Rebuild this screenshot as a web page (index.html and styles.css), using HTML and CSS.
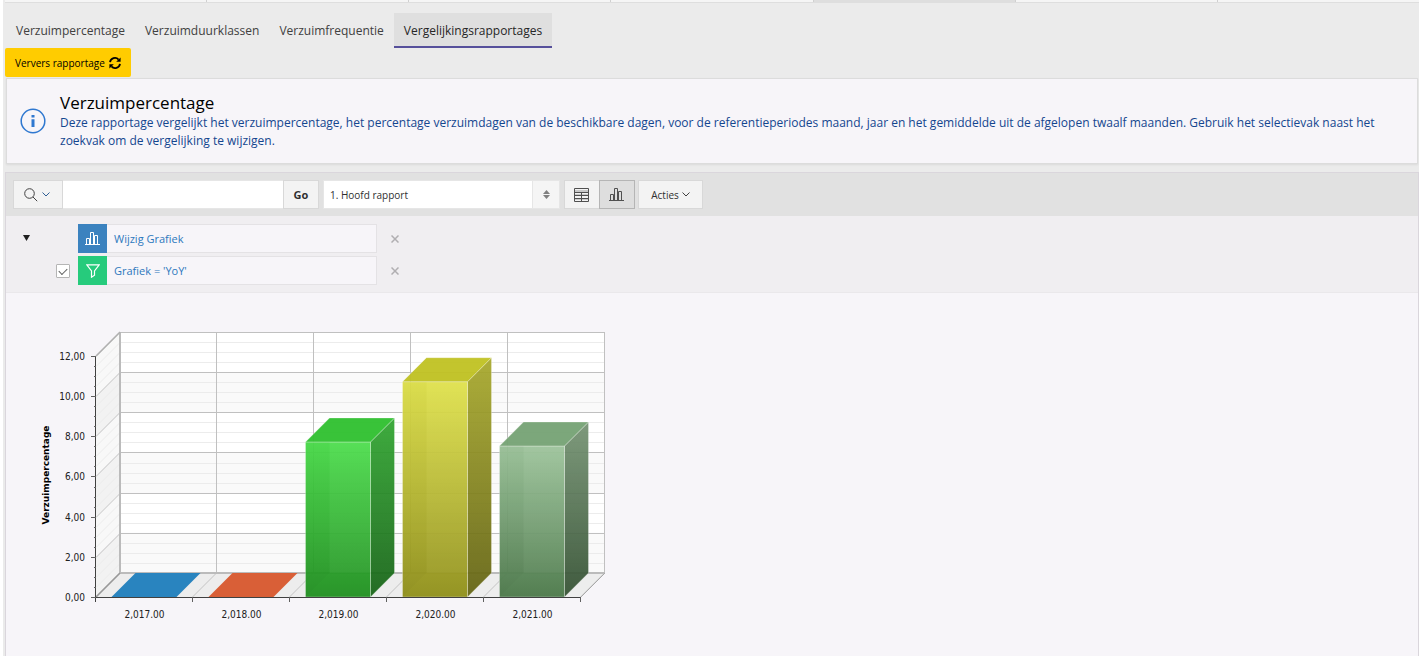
FILE: index.html
```html
<!DOCTYPE html>
<html lang="nl">
<head>
  <meta charset="UTF-8">
  <title>Vergelijkingsrapportages</title>
  <link rel="stylesheet" href="styles.css">
</head>
<body>

  <div class="page">
    <div class="top-strip">
      <span></span><span></span><span></span><span></span><span class="current"></span><span></span><span></span>
    </div>

    <nav class="tabs">
      <a href="#">Verzuimpercentage</a>
      <a href="#">Verzuimduurklassen</a>
      <a href="#">Verzuimfrequentie</a>
      <a href="#" class="active">Vergelijkingsrapportages</a>
    </nav>

    <button type="button" class="refresh">
      Ververs rapportage
      <svg width="12" height="12" viewBox="0 0 12 12">
        <path d="M1 5.2A5 5 0 0 1 9.6 2.6M11 6.8A5 5 0 0 1 2.4 9.4" fill="none" stroke="#000" stroke-width="1.8"/>
        <path d="M11.6 0.4V4.8H7.2ZM0.4 11.6V7.2H4.8Z" fill="#000"/>
      </svg>
    </button>

    <section class="info">
      <svg class="info-icon" width="26" height="26" viewBox="0 0 26 26">
        <circle cx="13" cy="13" r="11.8" fill="none" stroke="#2f78d0" stroke-width="1.5"/>
        <path d="M11.5 7h3v2.6h-3zM11.5 11.2h3V19h-3z" fill="#2f78d0"/>
      </svg>
      <div class="info-text">
        <h2>Verzuimpercentage</h2>
        <p>Deze rapportage vergelijkt het verzuimpercentage, het percentage verzuimdagen van de beschikbare dagen, voor de referentieperiodes maand, jaar en het gemiddelde uit de afgelopen twaalf maanden. Gebruik het selectievak naast het zoekvak om de vergelijking te wijzigen.</p>
      </div>
    </section>

    <section class="report">
      <div class="toolbar">
        <div class="search">
          <button type="button" class="btn search-col" aria-label="Kolommen om in te zoeken">
            <svg width="14" height="14" viewBox="0 0 14 14" fill="none" stroke="#404040"><circle cx="5.5" cy="5.5" r="4.8"/><path d="M9 9l4.2 4.2"/></svg>
            <svg width="8" height="5" viewBox="0 0 8 5" fill="none" stroke="#2f5f95"><path d="M0.5 0.5L4 4L7.5 0.5"/></svg>
          </button>
          <input type="text" class="search-field" aria-label="Zoeken">
          <button type="button" class="btn go">Go</button>
        </div>

        <div class="select-wrap">
          <select aria-label="Rapporten">
            <option>1. Hoofd rapport</option>
          </select>
          <span class="select-arrows">
            <svg width="7" height="9" viewBox="0 0 7 9" fill="#808080"><path d="M3.5 0L7 4H0zM3.5 9L0 5H7z"/></svg>
          </span>
        </div>

        <div class="views">
          <button type="button" class="btn view" aria-label="Rapport weergeven">
            <svg width="15" height="14" viewBox="0 0 15 14" fill="none">
              <path d="M1 2h13v2H1zM1 6h13v2H1zM1 10h13v2H1z" fill="#c9c9c9"/>
              <path d="M0.5 0.5h14v13H0.5zM0 4.5h15M0 7.5h15M0 10.5h15M7.5 4v9" stroke="#505050"/>
            </svg>
          </button>
          <button type="button" class="btn view pressed" aria-label="Grafiek weergeven">
            <svg width="15" height="13" viewBox="0 0 15 13" fill="none" stroke="#505050"><path d="M0 12.5h15M1.5 12V6.5h3V12M5.5 12V0.5h3V12M9.5 12V3.5h3V12"/></svg>
          </button>
        </div>

        <button type="button" class="btn actions">
          Acties
          <svg width="8" height="5" viewBox="0 0 8 5" fill="none" stroke="#404040"><path d="M0.5 0.5L4 4L7.5 0.5"/></svg>
        </button>
      </div>

      <div class="settings">
        <button type="button" class="toggle" aria-label="Instellingen"><svg width="8" height="6" viewBox="0 0 8 6"><path d="M1 0h7L4.5 6z" fill="#202020"/></svg></button>
        <ul class="filters">
          <li>
            <span class="check-cell"></span>
            <span class="filter-icon blue">
              <svg width="15" height="13" viewBox="0 0 15 13" fill="none" stroke="#fff"><path d="M0 12.5h15M1.5 12V6.5h3V12M5.5 12V0.5h3V12M9.5 12V3.5h3V12"/></svg>
            </span>
            <a href="#" class="filter-label">Wijzig Grafiek</a>
            <button type="button" class="remove" aria-label="Grafiek verwijderen"><svg width="8" height="8" viewBox="0 0 8 8" stroke="#b0aeb1" stroke-width="1.5"><path d="M0.5 0.5l7 7M7.5 0.5l-7 7"/></svg></button>
          </li>
          <li>
            <span class="check-cell"><input type="checkbox" checked aria-label="Filter actief"></span>
            <span class="filter-icon green">
              <svg width="14" height="14" viewBox="0 0 14 14" fill="none" stroke="#fff" stroke-width="1.2"><path d="M0.8 0.8h12.4L8.5 7v4.2L5.5 13.2V7z"/></svg>
            </span>
            <a href="#" class="filter-label">Grafiek = 'YoY'</a>
            <button type="button" class="remove" aria-label="Filter verwijderen"><svg width="8" height="8" viewBox="0 0 8 8" stroke="#b0aeb1" stroke-width="1.5"><path d="M0.5 0.5l7 7M7.5 0.5l-7 7"/></svg></button>
          </li>
        </ul>
      </div>

      <svg id="chart" class="chart" width="620" height="363" viewBox="0 0 620 363"></svg>
    </section>
  </div>

  <script src="chart.js"></script>
</body>
</html>
```

FILE: styles.css
```css
* {
  box-sizing: border-box;
}
body {
  margin: 0 3px 3px;
  background: #fff;
  font-family: "Open Sans", sans-serif;
  font-size: 11px;
  color: #303030;
}
button, input, select {
  font-family: inherit;
  font-size: 10px;
  color: inherit;
  margin: 0;
}
svg {
  display: block;
  flex: none;
}
.page {
  background: #ebebeb;
  padding-left: 2px;
}
.top-strip {
  display: flex;
  height: 3px;
  background: #f5f5f5;
  border-bottom: 1px solid #dedede;
}
.top-strip span {
  flex: 1;
  border-right: 1px solid #d0d0d0;
}
.top-strip span:last-child {
  border-right: none;
}
.top-strip .current {
  background: #dedede;
}

/* tabs */
.tabs {
  display: flex;
  padding: 10px 1px 0;
}
.tabs a {
  height: 35px;
  padding: 8px 10px 0;
  font-size: 12px;
  line-height: 19px;
  color: #404040;
  text-decoration: none;
}
.tabs .active {
  background: #dfdfdf;
  color: #262626;
  border-bottom: 2px solid #56509b;
}
.refresh {
  display: flex;
  align-items: center;
  gap: 4px;
  height: 29px;
  padding: 0 10px;
  border: none;
  border-radius: 2px;
  background: #ffcc00;
  color: #000;
  cursor: pointer;
}

/* info region */
.info {
  display: flex;
  align-items: center;
  margin: 1px 1px 8px;
  padding: 13px 30px 13px 13px;
  background: #f7f5f9;
  border: 1px solid #dcdcdc;
  box-shadow: 0 1px 2px rgba(0, 0, 0, 0.07);
}
.info-text {
  margin-left: 14px;
}
.info h2 {
  margin: 0;
  font-size: 17px;
  line-height: 22px;
  font-weight: 400;
  color: #000;
}
.info p {
  margin: 0;
  font-size: 12px;
  line-height: 18px;
  color: #14468f;
}

/* report */
.report {
  background: #f7f5f9;
  border: 1px solid #dad6dc;
  border-bottom: none;
}
.toolbar {
  display: flex;
  align-items: center;
  height: 43px;
  padding: 0 7px;
  background: #e1e1e1;
}
.btn {
  display: flex;
  align-items: center;
  justify-content: center;
  height: 29px;
  padding: 0;
  background: #f3f3f3;
  border: 1px solid #d8d8d8;
  cursor: pointer;
}
.search {
  display: flex;
}
.search-col {
  width: 50px;
  padding-right: 2px;
  gap: 4px;
}
.search-field {
  width: 220px;
  height: 29px;
  padding: 0 8px;
  border: 1px solid #e6e6e6;
  border-width: 1px 0;
  background: #fff;
}
.go {
  width: 36px;
  font-size: 11px;
  font-weight: 700;
}
.select-wrap {
  position: relative;
  width: 237px;
  margin-left: 4px;
}
.select-wrap select {
  appearance: none;
  display: block;
  width: 100%;
  height: 29px;
  padding: 0 34px 0 6px;
  border: 1px solid #e6e6e6;
  border-radius: 0;
  background: #fff;
}
.select-arrows {
  position: absolute;
  top: 1px;
  right: 1px;
  bottom: 1px;
  width: 27px;
  display: flex;
  align-items: center;
  justify-content: center;
  background: #f5f5f5;
  border-left: 1px solid #e6e6e6;
  pointer-events: none;
}
.views {
  display: flex;
  margin-left: 4px;
}
.view {
  width: 36px;
  padding-right: 1px;
}
.view + .view {
  margin-left: -1px;
}
.view.pressed {
  background: #dedede;
  border-color: #b5b5b5;
}
.actions {
  width: 65px;
  margin-left: 3px;
  gap: 3px;
}

/* chart and filter settings */
.settings {
  display: flex;
  align-items: flex-start;
  padding: 8px 16px 7px;
  background: #f0eef1;
  border-bottom: 1px solid #eae8eb;
}
.toggle {
  display: flex;
  align-items: center;
  height: 28px;
  padding: 0;
  border: none;
  background: none;
  cursor: pointer;
}
.filters {
  display: flex;
  flex-direction: column;
  gap: 3px;
  margin: 0;
  padding: 0;
  list-style: none;
}
.filters li {
  display: flex;
  align-items: center;
  height: 29px;
}
.check-cell {
  width: 48px;
  padding-left: 26px;
}
.check-cell input {
  appearance: none;
  display: block;
  width: 14px;
  height: 14px;
  background: #fff;
  border: 1px solid #b5b5b5;
  border-radius: 1px;
}
.check-cell input:checked::before {
  content: "";
  display: block;
  width: 7px;
  height: 4px;
  margin: 3px auto 0;
  border: solid #606060;
  border-width: 0 0 1px 1px;
  transform: rotate(-45deg);
}
.filter-icon {
  display: flex;
  align-items: center;
  justify-content: center;
  width: 29px;
  height: 29px;
}
.blue {
  background: #3b82bf;
}
.green {
  background: #26cb7c;
}
.filter-label {
  width: 270px;
  height: 29px;
  padding-left: 7px;
  line-height: 27px;
  background: #f7f5f9;
  border: 1px solid #e4e2e5;
  border-left: none;
  color: #2d78bd;
  text-decoration: none;
}
.remove {
  display: flex;
  margin-left: 14px;
  padding: 0;
  border: none;
  background: none;
  cursor: pointer;
}

/* chart */
.chart text {
  font-family: "DejaVu Sans Condensed", "DejaVu Sans", sans-serif;
  font-size: 10px;
  fill: #202020;
}
.chart .axis-title {
  font-family: "DejaVu Sans", sans-serif;
  font-size: 9px;
  font-weight: 700;
  fill: #000;
}
```

FILE: chart.js
```js
var data = [
  { label: "2,017.00", value: 0, top: "#2984bf" },
  { label: "2,018.00", value: 0, top: "#d95f37" },
  { label: "2,019.00", value: 7.72, top: "#2fc02f", light: "#48dc48", dark: "#1e8f1e", sideLight: "#2fa52f", sideDark: "#146214" },
  { label: "2,020.00", value: 10.72, top: "#c0c222", light: "#dfe147", dark: "#8f8f18", sideLight: "#a7a82a", sideDark: "#626210" },
  { label: "2,021.00", value: 7.52, top: "#76a374", light: "#9ac298", dark: "#4a7848", sideLight: "#749272", sideDark: "#324f30" }
];

// front plane origin, unit size, depth of the walls
var x0 = 90, y0 = 304, max = 12, unit = 241 / max, catWidth = 97, depth = 24;
var right = x0 + catWidth * data.length;
var out = "";

function poly(points, fill, extra) {
  out += '<polygon points="' + points.join(" ") + '" fill="' + fill + '" ' + (extra || "") + '/>';
}
function line(x1, y1, x2, y2, color, width) {
  out += '<line x1="' + x1 + '" y1="' + y1 + '" x2="' + x2 + '" y2="' + y2 + '" stroke="' + color + '" stroke-width="' + (width || 1) + '"/>';
}
function text(x, y, anchor, value) {
  out += '<text x="' + x + '" y="' + y + '" text-anchor="' + anchor + '">' + value + '</text>';
}
function level(value) {
  return y0 - Math.round(value * unit) + 0.5;
}

// walls with alternating bands
for (var v = 0; v < max; v += 2) {
  var b = y0 - v * unit, t = b - 2 * unit, odd = v % 4 === 0;
  poly([x0 + depth, b - depth, right + depth, b - depth, right + depth, t - depth, x0 + depth, t - depth], odd ? "#fafafa" : "#fff");
  poly([x0, b, x0 + depth, b - depth, x0 + depth, t - depth, x0, t], odd ? "#f2f2f2" : "#f8f8f8");
}
poly([x0, y0, right, y0, right + depth, y0 - depth, x0 + depth, y0 - depth], "#ededed");

// horizontal grid, minor every 0.5, major lines drawn last
[false, true].forEach(function (major) {
  for (var g = 0; g <= max; g += 0.5) {
    if ((g % 2 === 0) !== major) continue;
    line(x0 + depth, level(g) - depth, right + depth, level(g) - depth, major ? "#c0c0c0" : "#ececec");
    line(x0, level(g), x0 + depth, level(g) - depth, major ? "#c4c4c4" : "#ececec");
  }
});
// vertical grid
for (var c = 0; c <= data.length; c++) {
  var gx = x0 + c * catWidth - 0.5;
  line(gx + depth, y0 - depth, gx + depth, y0 - depth - max * unit, "#c0c0c0");
  line(gx, y0, gx + depth, y0 - depth, "#c4c4c4");
}
line(x0 + depth, y0 - depth, x0 + depth, y0 - depth - max * unit, "#bbb", 2);
line(x0 + depth, y0 - depth, right + depth, y0 - depth, "#bbb", 2);
line(x0, y0 - max * unit, x0 + depth, y0 - depth - max * unit, "#b0b0b0", 1.5);
line(x0, y0, x0 + depth, y0 - depth, "#999", 1.5);
line(right, y0, right + depth, y0 - depth, "#aaa");

// bars
out += "<defs>";
data.forEach(function (d, i) {
  if (!d.value) return;
  out += '<linearGradient id="f' + i + '" x2="0" y2="1"><stop stop-color="' + d.light + '"/><stop offset="1" stop-color="' + d.dark + '"/></linearGradient>';
  out += '<linearGradient id="s' + i + '" x2="0" y2="1"><stop stop-color="' + d.sideLight + '"/><stop offset="1" stop-color="' + d.sideDark + '"/></linearGradient>';
});
out += "</defs>";
data.forEach(function (d, i) {
  var l = x0 + i * catWidth + 15.5, r = l + 65, top = y0 - d.value * unit;
  if (d.value) {
    var edge = 'stroke="#fff" stroke-opacity="0.3"';
    poly([r, y0, r + depth, y0 - depth, r + depth, top - depth, r, top], "url(#s" + i + ")", 'opacity="0.92" ' + edge);
    poly([l, y0, r, y0, r, top, l, top], "url(#f" + i + ")", 'opacity="0.94" ' + edge);
    poly([l, y0, l + depth, y0 - depth, l + depth, top, l, top], "#000", 'opacity="0.015"');
    poly([l + depth, top, r, top, r, y0 - depth, l + depth, y0 - depth], "#fff", 'opacity="0.03"');
    poly([l, top, r, top, r + depth, top - depth, l + depth, top - depth], d.top, 'opacity="0.95" ' + edge);
  } else {
    poly([l, top, r, top, r + depth, top - depth, l + depth, top - depth], d.top);
  }
  text(x0 + (i + 0.5) * catWidth, y0 + 21, "middle", d.label);
});

// axes
line(x0 - 0.5, y0 - max * unit, x0 - 0.5, y0 + 5, "#404040");
line(x0 - 5, y0 + 0.5, right, y0 + 0.5, "#404040");
for (var k = 0; k <= max; k += 0.5) {
  line(x0 - (k % 2 === 0 ? 5 : 2), level(k), x0, level(k), "#606060");
  if (k % 2 === 0) text(x0 - 11, level(k) + 3.5, "end", k + ",00");
}
for (var n = 1; n <= data.length; n++) {
  line(x0 + n * catWidth - 0.5, y0, x0 + n * catWidth - 0.5, y0 + 5, "#606060");
}
out += '<text class="axis-title" text-anchor="middle" transform="translate(43 182) rotate(-90)">Verzuimpercentage</text>';

document.getElementById("chart").innerHTML = out;
```
